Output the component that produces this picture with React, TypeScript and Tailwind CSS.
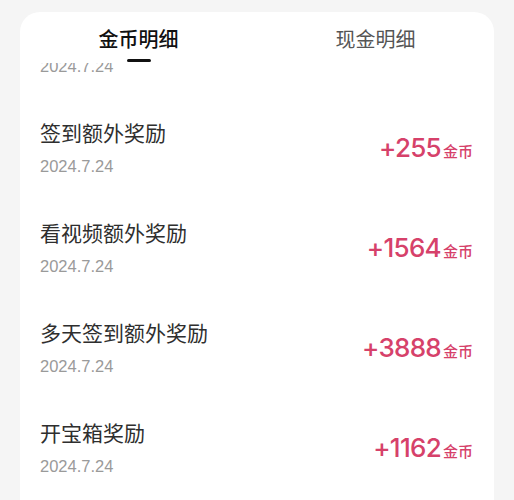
import { useState } from 'react'

const FONT = { fontFamily: '"Liberation Sans", "Noto Sans CJK SC", sans-serif' }
const NUM_FONT = { fontFamily: 'Inter, "Noto Sans CJK SC", sans-serif' }

interface Record {
  title: string
  date: string
  amount: number
}

const records: Record[] = [
  { title: '签到奖励', date: '2024.7.24', amount: 100 },
  { title: '签到额外奖励', date: '2024.7.24', amount: 255 },
  { title: '看视频额外奖励', date: '2024.7.24', amount: 1564 },
  { title: '多天签到额外奖励', date: '2024.7.24', amount: 3888 },
  { title: '开宝箱奖励', date: '2024.7.24', amount: 1162 },
]

function RecordRow({ r }: { r: Record }) {
  return (
    <div className="flex h-[100px] items-center justify-between pl-5 pr-[21px]">
      <div className="flex flex-col">
        <span className="text-[21px] leading-[28px] text-[#2e2e2e]">{r.title}</span>
        <span className="mt-[7px] text-[16.5px] leading-[22px] text-[#9a9a9a]">{r.date}</span>
      </div>
      <div className="flex items-baseline text-[#d6416a]" style={NUM_FONT}>
        <span className="text-[26px] font-medium leading-[30px] tracking-[-0.7px]">+{r.amount}</span>
        <span className="ml-[2px] text-[15px] font-medium">金币</span>
      </div>
    </div>
  )
}

export default function App() {
  const [tab, setTab] = useState(0)
  const tabs = ['金币明细', '现金明细']

  return (
    <div className="h-[500px] overflow-hidden bg-[#f5f5f5] pt-3" style={FONT}>
      <div className="mx-5 h-[600px] rounded-t-[20px] bg-white">
        <div className="flex pt-[14px] pb-[1px]">
          {tabs.map((t, i) => (
            <button key={t} onClick={() => setTab(i)} className="flex flex-1 flex-col items-center">
              <span className={`text-[20px] leading-[28px] ${tab === i ? 'font-medium text-[#111111]' : 'text-[#555555]'}`}>{t}</span>
              <span className={`mt-[5px] h-[3px] w-6 rounded-full ${tab === i ? 'bg-[#111111]' : 'bg-transparent'}`} />
            </button>
          ))}
        </div>
        <div className="h-[440px] overflow-hidden">
          <div className="-mt-[65px]">
            {records.map((r, i) => (
              <RecordRow key={i} r={r} />
            ))}
          </div>
        </div>
      </div>
    </div>
  )
}
